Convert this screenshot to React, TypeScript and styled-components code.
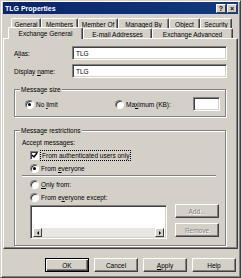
import React from 'react';
import styled, { createGlobalStyle } from 'styled-components';

const GlobalStyle = createGlobalStyle`
  body {
    margin: 0;
    background: #d4d0c8;
    font-family: "Liberation Sans", Arial, sans-serif;
  }
`;

const Window = styled.div`
  width: 241px;
  height: 278px;
  box-sizing: border-box;
  background: #d4d0c8;
  border-top: 1px solid #d4d0c8;
  border-left: 1px solid #d4d0c8;
  border-right: 1px solid #404040;
  border-bottom: 1px solid #404040;
  box-shadow: inset 1px 1px 0 #fff, inset -1px -1px 0 #808080;
  padding: 1px 2px 2px 2px;
  display: flex;
  flex-direction: column;
  font-size: 6.5px;
  color: #000;
`;

const TitleBar = styled.div`
  height: 12px;
  display: flex;
  align-items: center;
  justify-content: space-between;
  padding: 0 1px 0 2px;
  background: linear-gradient(to right, #0a246a, #123a7e);
  color: #fff;
  font-weight: bold;
  font-size: 7px;
`;

const TitleButtons = styled.div`
  display: flex;
  gap: 1px;
`;

const TitleButton = styled.div`
  width: 10px;
  height: 9px;
  box-sizing: border-box;
  background: #d4d0c8;
  color: #000;
  border-top: 1px solid #fff;
  border-left: 1px solid #fff;
  border-right: 1px solid #404040;
  border-bottom: 1px solid #404040;
  font-size: 7px;
  font-weight: bold;
  line-height: 7px;
  text-align: center;
`;

const TabRow = styled.div<{ $indent: number; $top?: number }>`
  display: flex;
  padding-left: ${p => p.$indent}px;
  margin-top: ${p => p.$top ?? 0}px;
  height: 10px;
  align-items: flex-end;
`;

const Tab = styled.div<{ $w: number; $active?: boolean }>`
  width: ${p => p.$w}px;
  height: ${p => (p.$active ? 12 : 10)}px;
  margin-bottom: ${p => (p.$active ? -1 : 0)}px;
  box-sizing: border-box;
  border-top: 1px solid #fff;
  border-left: 1px solid #fff;
  border-right: 1px solid #404040;
  border-radius: 2px 2px 0 0;
  box-shadow: inset -1px 0 0 #808080;
  background: #d4d0c8;
  position: relative;
  z-index: ${p => (p.$active ? 1 : 0)};
  display: flex;
  align-items: center;
  justify-content: center;
  white-space: nowrap;
  padding-top: ${p => (p.$active ? 0 : 1)}px;
`;

const Panel = styled.div`
  height: 211px;
  box-sizing: border-box;
  border-top: 1px solid #fff;
  border-left: 1px solid #fff;
  border-right: 1px solid #404040;
  border-bottom: 1px solid #404040;
  box-shadow: inset -1px -1px 0 #808080;
  padding: 7px 10px 0 10px;
  display: flex;
  flex-direction: column;
`;

const FieldRow = styled.div`
  display: flex;
  align-items: center;
  height: 14px;
  & + & {
    margin-top: 4px;
  }
`;

const FieldLabel = styled.div`
  width: 58px;
`;

const TextBox = styled.div<{ $w?: number }>`
  ${p => (p.$w ? `width: ${p.$w}px;` : 'flex: 1;')}
  height: 14px;
  box-sizing: border-box;
  background: #fff;
  border-top: 1px solid #808080;
  border-left: 1px solid #808080;
  border-right: 1px solid #fff;
  border-bottom: 1px solid #fff;
  box-shadow: inset 1px 1px 0 #404040, inset -1px -1px 0 #d4d0c8;
  padding: 0 3px;
  display: flex;
  align-items: center;
`;

const Group = styled.div<{ $top: number; $h: number }>`
  position: relative;
  margin-top: ${p => p.$top}px;
  height: ${p => p.$h}px;
  box-sizing: border-box;
  border: 1px solid #808080;
  box-shadow: inset 1px 1px 0 #fff, 1px 1px 0 #fff;
  margin-right: 1px;
`;

const GroupTitle = styled.span`
  position: absolute;
  top: -5px;
  left: 5px;
  padding: 0 1px;
  background: #d4d0c8;
  line-height: 9px;
`;

const SizeRow = styled.div`
  display: flex;
  align-items: center;
  padding: 7px 5px 0 10px;
  height: 14px;
`;

const Spacer = styled.div`
  flex: 1;
`;

const Option = styled.label<{ $w?: number }>`
  display: flex;
  align-items: center;
  gap: 2px;
  height: 13px;
  ${p => (p.$w ? `width: ${p.$w}px;` : '')}
`;

const RadioDot = styled.span<{ $on?: boolean }>`
  width: 9px;
  height: 9px;
  box-sizing: border-box;
  border-radius: 50%;
  background: #fff;
  border: 1px solid;
  border-color: #808080 #fff #fff #808080;
  box-shadow: inset 1px 1px 0 #404040;
  display: flex;
  align-items: center;
  justify-content: center;
  flex-shrink: 0;
  &::after {
    content: '';
    width: 3px;
    height: 3px;
    border-radius: 50%;
    background: ${p => (p.$on ? '#000' : 'transparent')};
  }
`;

const CheckBox = styled.span`
  width: 9px;
  height: 9px;
  box-sizing: border-box;
  background: #fff;
  border: 1px solid;
  border-color: #808080 #fff #fff #808080;
  box-shadow: inset 1px 1px 0 #404040;
  display: flex;
  align-items: center;
  justify-content: center;
  flex-shrink: 0;
`;

const Focus = styled.span`
  outline: 1px dotted #000;
  padding: 0 1px;
  line-height: 9px;
`;

const Restrictions = styled.div`
  padding: 5px 0 0 7px;
  display: flex;
  flex-direction: column;
`;

const Indented = styled.div<{ $top?: number }>`
  padding-left: 8px;
  margin-top: ${p => p.$top ?? 0}px;
  display: flex;
  flex-direction: column;
`;

const Separator = styled.div`
  height: 0;
  border-top: 1px solid #808080;
  border-bottom: 1px solid #fff;
  margin-right: 9px;
`;

const ListRow = styled.div`
  display: flex;
  gap: 8px;
  margin-top: 1px;
  padding-left: 8px;
`;

const ListBox = styled.div`
  width: 137px;
  height: 34px;
  box-sizing: border-box;
  background: #fff;
  border-top: 1px solid #808080;
  border-left: 1px solid #808080;
  border-right: 1px solid #fff;
  border-bottom: 1px solid #fff;
  box-shadow: inset 1px 1px 0 #404040, inset -1px -1px 0 #d4d0c8;
  padding: 2px 2px 1px 2px;
  display: flex;
  flex-direction: column;
  justify-content: flex-end;
`;

const ScrollBar = styled.div`
  height: 9px;
  display: flex;
  background: #e9e7e2;
`;

const ScrollArrow = styled.div<{ $dir: 'left' | 'right' }>`
  width: 9px;
  height: 9px;
  box-sizing: border-box;
  background: #d4d0c8;
  border-top: 1px solid #fff;
  border-left: 1px solid #fff;
  border-right: 1px solid #404040;
  border-bottom: 1px solid #404040;
  display: flex;
  align-items: center;
  justify-content: center;
  &::after {
    content: '';
    width: 0;
    height: 0;
    border-top: 2px solid transparent;
    border-bottom: 2px solid transparent;
    ${p => (p.$dir === 'left' ? 'border-right: 2px solid #000;' : 'border-left: 2px solid #000;')}
  }
`;

const SideButtons = styled.div`
  display: flex;
  flex-direction: column;
  gap: 5px;
  margin-top: -1px;
`;

const Button = styled.div<{ $default?: boolean; $disabled?: boolean }>`
  width: 44px;
  height: 14px;
  box-sizing: border-box;
  background: #d4d0c8;
  border: 1px solid;
  border-color: ${p => (p.$default ? '#000' : '#fff #404040 #404040 #fff')};
  box-shadow: ${p =>
    p.$default
      ? 'inset 1px 1px 0 #fff, inset -1px -1px 0 #404040, inset -2px -2px 0 #808080'
      : 'inset -1px -1px 0 #808080'};
  display: flex;
  align-items: center;
  justify-content: center;
  color: ${p => (p.$disabled ? '#808080' : '#000')};
  text-shadow: ${p => (p.$disabled ? '1px 1px 0 #fff' : 'none')};
`;

const Footer = styled.div`
  display: flex;
  justify-content: flex-end;
  gap: 5px;
  padding: 9px 2px 0 0;
`;

const U = styled.span`
  text-decoration: underline;
`;

const tabsBack = [
  { label: 'General', w: 30 },
  { label: 'Members', w: 37 },
  { label: 'Member Of', w: 40 },
  { label: 'Managed By', w: 51 },
  { label: 'Object', w: 31 },
  { label: 'Security', w: 32 },
];

const tabsFront = [
  { label: 'Exchange General', w: 75, active: true },
  { label: 'E-mail Addresses', w: 69 },
  { label: 'Exchange Advanced', w: 81 },
];

function App(): JSX.Element {
  return (
    <>
      <GlobalStyle />
      <Window>
        <TitleBar>
          <span>TLG Properties</span>
          <TitleButtons>
            <TitleButton>?</TitleButton>
            <TitleButton>×</TitleButton>
          </TitleButtons>
        </TitleBar>

        <TabRow $indent={8} $top={4}>
          {tabsBack.map(t => (
            <Tab key={t.label} $w={t.w}>
              {t.label}
            </Tab>
          ))}
        </TabRow>
        <TabRow $indent={5}>
          {tabsFront.map(t => (
            <Tab key={t.label} $w={t.w} $active={t.active}>
              {t.label}
            </Tab>
          ))}
        </TabRow>

        <Panel>
          <FieldRow>
            <FieldLabel>
              A<U>l</U>ias:
            </FieldLabel>
            <TextBox>TLG</TextBox>
          </FieldRow>
          <FieldRow>
            <FieldLabel>
              Display <U>n</U>ame:
            </FieldLabel>
            <TextBox>TLG</TextBox>
          </FieldRow>

          <Group $top={11} $h={28}>
            <GroupTitle>Message size</GroupTitle>
            <SizeRow>
              <Option $w={90}>
                <RadioDot $on />
                <span>
                  No <U>l</U>imit
                </span>
              </Option>
              <Option>
                <RadioDot />
                <span>
                  Ma<U>x</U>imum (KB):
                </span>
              </Option>
              <Spacer />
              <TextBox $w={27} />
            </SizeRow>
          </Group>

          <Group $top={13} $h={116}>
            <GroupTitle>Message restrictions</GroupTitle>
            <Restrictions>
              <Option>Accept messages:</Option>
              <Indented>
                <Option>
                  <CheckBox>
                    <svg width="7" height="7" viewBox="0 0 7 7">
                      <path d="M1 3 L3 5 L6 1" stroke="#000" strokeWidth="1.4" fill="none" />
                    </svg>
                  </CheckBox>
                  <Focus>From authenticated users only</Focus>
                </Option>
                <Option>
                  <RadioDot $on />
                  <span>
                    From <U>e</U>veryone
                  </span>
                </Option>
              </Indented>
              <Separator />
              <Indented $top={1}>
                <Option>
                  <RadioDot />
                  <span>
                    <U>O</U>nly from:
                  </span>
                </Option>
                <Option>
                  <RadioDot />
                  <span>
                    From e<U>v</U>eryone except:
                  </span>
                </Option>
              </Indented>
              <ListRow>
                <ListBox>
                  <ScrollBar>
                    <ScrollArrow $dir="left" />
                    <Spacer />
                    <ScrollArrow $dir="right" />
                  </ScrollBar>
                </ListBox>
                <SideButtons>
                  <Button $disabled>Add...</Button>
                  <Button $disabled>Remove</Button>
                </SideButtons>
              </ListRow>
            </Restrictions>
          </Group>
        </Panel>

        <Footer>
          <Button $default>OK</Button>
          <Button>Cancel</Button>
          <Button>
            <span>
              <U>A</U>pply
            </span>
          </Button>
          <Button>Help</Button>
        </Footer>
      </Window>
    </>
  );
}

export default App;
